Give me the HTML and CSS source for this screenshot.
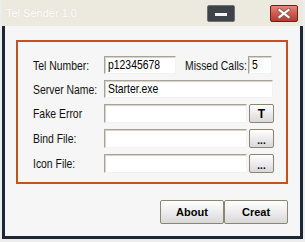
FILE: index.html
```html
<!DOCTYPE html>
<html>
<head>
<meta charset="utf-8">
<link rel="stylesheet" href="styles.css">
</head>
<body>
<div class="window">
  <div class="titlebar">
    <span class="title">Tel Sender 1.0</span>
    <span class="tb-btn min"><span class="bar"></span></span>
    <span class="tb-btn close">
      <svg width="16" height="11" viewBox="0 0 16 11"><path d="M3.5 2 L12.5 9 M12.5 2 L3.5 9" stroke="#8a5a58" stroke-width="4" stroke-linecap="square"/><path d="M3.5 2 L12.5 9 M12.5 2 L3.5 9" stroke="#ffffff" stroke-width="2.2" stroke-linecap="square"/></svg>
    </span>
  </div>
  <div class="client">
    <div class="frame">
      <div class="row">
        <span class="label"><span class="nar">Tel Number:</span></span>
        <span class="input w-tel"><span class="nar">p12345678</span></span>
        <span class="label mid"><span class="nar">Missed Calls:</span></span>
        <span class="input w-miss"><span class="nar">5</span></span>
      </div>
      <div class="row">
        <span class="label"><span class="nar">Server Name:</span></span>
        <span class="input w-server"><span class="nar">Starter.exe</span></span>
      </div>
      <div class="row tall">
        <span class="label"><span class="nar">Fake Error</span></span>
        <span class="input w-field"></span>
        <span class="btn small">T</span>
      </div>
      <div class="row tall">
        <span class="label"><span class="nar">Bind File:</span></span>
        <span class="input w-field"></span>
        <span class="btn small dots">...</span>
      </div>
      <div class="row tall">
        <span class="label"><span class="nar">Icon File:</span></span>
        <span class="input w-field"></span>
        <span class="btn small dots">...</span>
      </div>
    </div>
    <div class="actions">
      <span class="btn big">About</span>
      <span class="btn big">Creat</span>
    </div>
  </div>
</div>
</body>
</html>
```

FILE: styles.css
```css
html, body {
  margin: 0;
  padding: 0;
  background: #ededed;
}
body {
  width: 305px;
  height: 242px;
  overflow: hidden;
  font-family: "Liberation Sans", Arial, sans-serif;
}
.window {
  margin-left: 2px;
  width: 301px;
  height: 239px;
  display: flex;
  flex-direction: column;
}
.titlebar {
  height: 26px;
  background: #ece9df;
  display: flex;
  align-items: flex-start;
  border-radius: 3px 3px 0 0;
  flex-shrink: 0;
}
.title {
  font-size: 11px;
  color: #ffffff;
  margin-left: 4px;
  margin-top: 7px;
  width: 201px;
  text-shadow: 0 0 1px #d8d4c8;
}
.tb-btn {
  width: 28px;
  height: 17px;
  margin-top: 5px;
  box-sizing: border-box;
  border-radius: 2px;
  display: flex;
  align-items: center;
  justify-content: center;
}
.min {
  background: #3d4348;
  border: 1px solid #6e7276;
}
.min .bar {
  width: 12px;
  height: 3px;
  background: #f4f4f4;
  margin-top: 1px;
}
.close {
  margin-left: 35px;
  background: linear-gradient(#e8867c, #d05a4e 50%, #b83a30);
  border: 1px solid #6a2020;
}
.client {
  flex: 1;
  background: #f6f6f6;
  border: 3px solid #1e2534;
  border-top: none;
  display: flex;
  flex-direction: column;
}
.frame {
  margin: 14px 0 0 11px;
  width: 272px;
  height: 144px;
  box-sizing: border-box;
  border: 2px solid #c4521e;
  padding: 14px 0 0 15px;
  display: flex;
  flex-direction: column;
  gap: 6px;
}
.row {
  display: flex;
  align-items: center;
  height: 18px;
}
.row.tall { height: 19px; }
.label {
  width: 71px;
  font-size: 13px;
  color: #111;
  white-space: nowrap;
  flex-shrink: 0;
}
.nar {
  display: inline-block;
  transform: scaleX(0.8);
  transform-origin: left center;
  white-space: nowrap;
}
.label.mid {
  width: 61px;
  margin: 0 2px 0 9px;
}
.input {
  height: 100%;
  box-sizing: border-box;
  background: #ffffff;
  border-top: 1px solid #a6a497;
  border-left: 1px solid #a6a497;
  box-shadow: inset 1px 1px 0 #d6d3c8;
  border-right: 1px solid #f2f2f2;
  border-bottom: 1px solid #f2f2f2;
  font-size: 13px;
  color: #000;
  padding-left: 3px;
  line-height: 16px;
  overflow: hidden;
  flex-shrink: 0;
}
.w-tel { width: 72px; }
.w-miss { width: 24px; }
.w-server { width: 169px; }
.w-field { width: 143px; }
.btn {
  box-sizing: border-box;
  display: flex;
  align-items: center;
  justify-content: center;
  font-weight: bold;
  color: #000;
  background: linear-gradient(#ffffff, #f0f0f0 40%, #d8d8d8);
  border: 1px solid #8a8672;
  border-radius: 2px;
}
.btn.small {
  width: 25px;
  height: 19px;
  margin-left: 2px;
  font-size: 12px;
}
.btn.dots {
  font-size: 10px;
  padding-top: 3px;
}
.actions {
  display: flex;
  margin: 16px 0 0 155px;
}
.btn.big {
  width: 64px;
  height: 24px;
  font-size: 11px;
}
```
